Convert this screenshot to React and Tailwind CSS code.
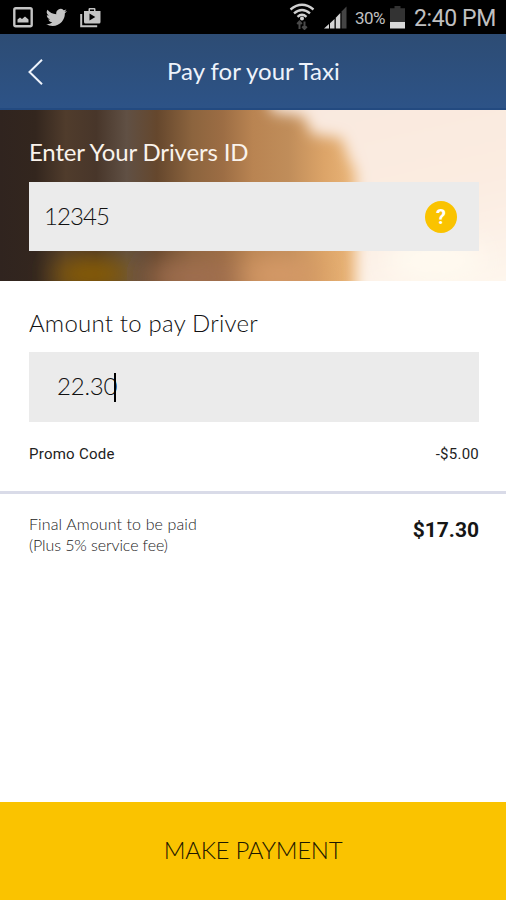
import {useState} from 'react';

function PictureIcon() {
  return (
    <svg width="20" height="21" viewBox="0 0 20 21" fill="none">
      <rect x="1.3" y="1.3" width="17.4" height="18" rx="1.5" stroke="#c4c4c4" strokeWidth="2.4"/>
      <path d="M4.500 15.500v-3l2.500-2 2 1.500 3-2.500 3.500 3v3z" fill="#c4c4c4"/>
    </svg>
  );
}

function TwitterIcon() {
  return (
    <svg width="21" height="21" viewBox="0 0 24 24" preserveAspectRatio="none" fill="#c4c4c4">
      <path d="M23.95 4.57a10 10 0 0 1-2.82.77 4.96 4.96 0 0 0 2.16-2.72c-.95.56-2 .96-3.13 1.19a4.92 4.92 0 0 0-8.38 4.48C7.69 8.1 4.07 6.13 1.64 3.16a4.92 4.92 0 0 0 1.52 6.57 4.9 4.9 0 0 1-2.23-.61v.06a4.92 4.92 0 0 0 3.95 4.83 5 5 0 0 1-2.21.08 4.94 4.94 0 0 0 4.6 3.42A9.87 9.87 0 0 1 0 19.54a13.99 13.99 0 0 0 7.55 2.21c9.05 0 14-7.5 14-13.98 0-.21 0-.42-.02-.63a9.94 9.94 0 0 0 2.46-2.55z"/>
    </svg>
  );
}

function StoreIcon() {
  return (
    <svg width="21" height="21" viewBox="0 0 21 21" fill="none">
      <path d="M1.200 7v12.200h16" stroke="#c4c4c4" strokeWidth="2"/>
      <path fillRule="evenodd" d="M4 4h4.500V2.200Q8.500 1 9.700 1h4.600q1.200 0 1.200 1.200V4H20.500v11q0 1.500-1.500 1.500H5.500Q4 16.500 4 15zM10 2.600V4h4V2.600zM9.500 6.500v7l5.800-3.500z" fill="#c4c4c4"/>
    </svg>
  );
}

function WifiIcon() {
  return (
    <svg width="26" height="27" viewBox="0 0 26 27" fill="none">
      <g stroke="#d0d0d0" strokeWidth="2.3">
        <path d="M1.500 6.500Q13-3 24.500 6.500"/>
        <path d="M5 10.400Q13 3.500 21 10.400"/>
        <path d="M8.500 13.800Q13 9.800 17.500 13.800"/>
      </g>
      <circle cx="13" cy="15.500" r="2" fill="#d0d0d0"/>
      <path d="M10.500 26v-7M15.500 18.500v7M8.200 21l2.300-2.500 2.300 2.500M13.200 23.500l2.300 2.500 2.300-2.500" stroke="#4a4a4a" strokeWidth="2"/>
    </svg>
  );
}

function SignalIcon() {
  return (
    <svg width="23" height="23" viewBox="0 0 23 23">
      <path d="M0 22.500 5 18v4.500z" fill="#d4d4d4"/>
      <path d="M6 17.200 10.500 13v9.500H6z" fill="#d4d4d4"/>
      <path d="M11.800 11.700 16.300 7v15.500h-4.500z" fill="#d4d4d4"/>
      <path d="M17.600 5.500 22.500.5v22h-4.900z" fill="#444"/>
    </svg>
  );
}

function BatteryIcon() {
  return (
    <svg width="15" height="23" viewBox="0 0 15 23">
      <path d="M4.500 0h6v2.200H15V16H0V2.200h4.500z" fill="#333"/>
      <path d="M0 16h15v6.500H0z" fill="#d8d8d8"/>
    </svg>
  );
}

function StatusBar() {
  return (
    <div className="flex h-[34px] items-start bg-black font-['Roboto',sans-serif] text-[#c0c0c0]">
      <div className="flex gap-[13px] pt-[7px] pl-[13px]">
        <PictureIcon/>
        <TwitterIcon/>
        <StoreIcon/>
      </div>
      <div className="ml-auto flex pr-[11px]">
        <div className="mt-[3px] mr-[9px]"><WifiIcon/></div>
        <div className="mt-[6px] mr-[8px]"><SignalIcon/></div>
        <span className="mt-[6px] mr-[4px] w-[31px] text-[17px] leading-6 tracking-[-0.5px] whitespace-nowrap">30%</span>
        <div className="mt-[6px] mr-[9px]"><BatteryIcon/></div>
        <span className="mt-[5px] w-[81px] text-[23px] leading-7 tracking-[-0.4px] whitespace-nowrap">2:40 PM</span>
      </div>
    </div>
  );
}

// out of focus street at sunset, behind the driver id field
function StreetBackdrop() {
  return (
    <svg className="absolute inset-0 h-full w-full" viewBox="0 0 506 171" preserveAspectRatio="none">
      <defs>
        <linearGradient id="street">
          <stop offset="0" stopColor="#30241f"/>
          <stop offset="0.07" stopColor="#33261e"/>
          <stop offset="0.13" stopColor="#503c2c"/>
          <stop offset="0.19" stopColor="#48362a"/>
          <stop offset="0.25" stopColor="#605044"/>
          <stop offset="0.31" stopColor="#65472d"/>
          <stop offset="0.38" stopColor="#8c643e"/>
          <stop offset="0.44" stopColor="#9c6d44"/>
          <stop offset="0.5" stopColor="#b98452"/>
          <stop offset="0.57" stopColor="#c08d5a"/>
          <stop offset="0.64" stopColor="#dca468"/>
          <stop offset="0.7" stopColor="#eab578"/>
        </linearGradient>
        <linearGradient id="sky" x2="0.3" y2="1">
          <stop offset="0" stopColor="#f8e8de"/>
          <stop offset="0.6" stopColor="#fbece1"/>
          <stop offset="1" stopColor="#fef6ed"/>
        </linearGradient>
        <filter id="soft" x="-20%" y="-20%" width="140%" height="140%"><feGaussianBlur stdDeviation="7"/></filter>
        <filter id="softer" x="-50%" y="-80%" width="200%" height="260%"><feGaussianBlur stdDeviation="13"/></filter>
      </defs>
      <rect width="506" height="171" fill="url(#street)"/>
      <g filter="url(#softer)">
        <ellipse cx="92" cy="164" rx="40" ry="16" fill="#8f6000"/>
        <ellipse cx="195" cy="167" rx="50" ry="18" fill="#a06e50"/>
        <ellipse cx="280" cy="165" rx="40" ry="18" fill="#d69a68"/>
      </g>
      <path d="M262-30 272 2 304 6 312 24 342 28 349 48 356 62V210H560V-30z" fill="url(#sky)" filter="url(#soft)"/>
      <ellipse cx="435" cy="150" rx="50" ry="22" fill="#fffaf0" filter="url(#softer)"/>
    </svg>
  );
}

export default function App() {
  const [driverId] = useState('12345');
  const [amount] = useState('22.30');

  return (
    <div className="flex h-[900px] w-[506px] flex-col overflow-hidden bg-white font-['Lato',sans-serif]">
      <StatusBar/>

      <header className="flex h-[76px] items-center border-b-2 border-[#234a80] bg-linear-to-b from-[#2d4c74] to-[#2d5387] text-[#eef3fb]">
        <button className="mt-px ml-[28px] w-[16px]">
          <svg width="16" height="26" viewBox="0 0 16 26" fill="none" stroke="#eef3fb" strokeWidth="2">
            <path d="M14 .800 1.500 13 14 25.200"/>
          </svg>
        </button>
        <h1 className="ml-[123px] text-[24px] leading-8 whitespace-nowrap">Pay for your Taxi</h1>
      </header>

      <section className="relative h-[171px] overflow-hidden">
        <StreetBackdrop/>
        <div className="relative pt-[26px] pr-[27px] pl-[29px]">
          <label className="block text-[24px] leading-8 tracking-[-0.15px] whitespace-nowrap text-[#faf3ec]">Enter Your Drivers ID</label>
          <div className="mt-[14px] flex h-[69px] items-center justify-between bg-[#ebebeb] pr-[22px] pl-[15px]">
            <span className="-mt-[2px] text-[24px] font-light tracking-[-0.9px] text-[#111]">{driverId}</span>
            <button className="flex h-8 w-8 items-center justify-center rounded-full bg-[#fac300] font-['Roboto',sans-serif] text-[20px] font-bold text-white">?</button>
          </div>
        </div>
      </section>

      <section className="h-[210px] pt-[26px] pr-[27px] pl-[29px] text-[#111]">
        <label className="block text-[24px] leading-8 font-light tracking-[0.22px] whitespace-nowrap">Amount to pay Driver</label>
        <div className="mt-[13px] flex h-[70px] items-center bg-[#ebebeb] pl-[28px]">
          <span className="-mt-[2px] w-[57px] text-[24px] font-light tracking-[-0.2px] whitespace-nowrap">{amount}</span>
          <span className="h-[29px] w-[2px] bg-black"></span>
        </div>
        <div className="mt-[22px] flex justify-between font-['Roboto',sans-serif] text-[15px] leading-5 tracking-[0.25px] text-[#222]">
          <span>Promo Code</span>
          <span>-$5.00</span>
        </div>
      </section>

      <section className="flex justify-between border-t-[3px] border-[#d9dbe8] pt-[19px] pr-[27px] pl-[29px]">
        <p className="text-[16px] leading-[21px] font-light text-[#222]">
          <span className="block tracking-[0.12px]">Final Amount to be paid</span>
          <span className="block tracking-[-0.1px]">(Plus 5% service fee)</span>
        </p>
        <span className="mt-[3px] font-['Roboto',sans-serif] text-[21px] leading-7 font-bold text-[#161616]">$17.30</span>
      </section>

      <button className="mt-auto h-[98px] bg-[#fac300] pb-[2px] text-[24px] font-light tracking-[-0.3px] text-[#1d1800]">MAKE PAYMENT</button>
    </div>
  );
}
